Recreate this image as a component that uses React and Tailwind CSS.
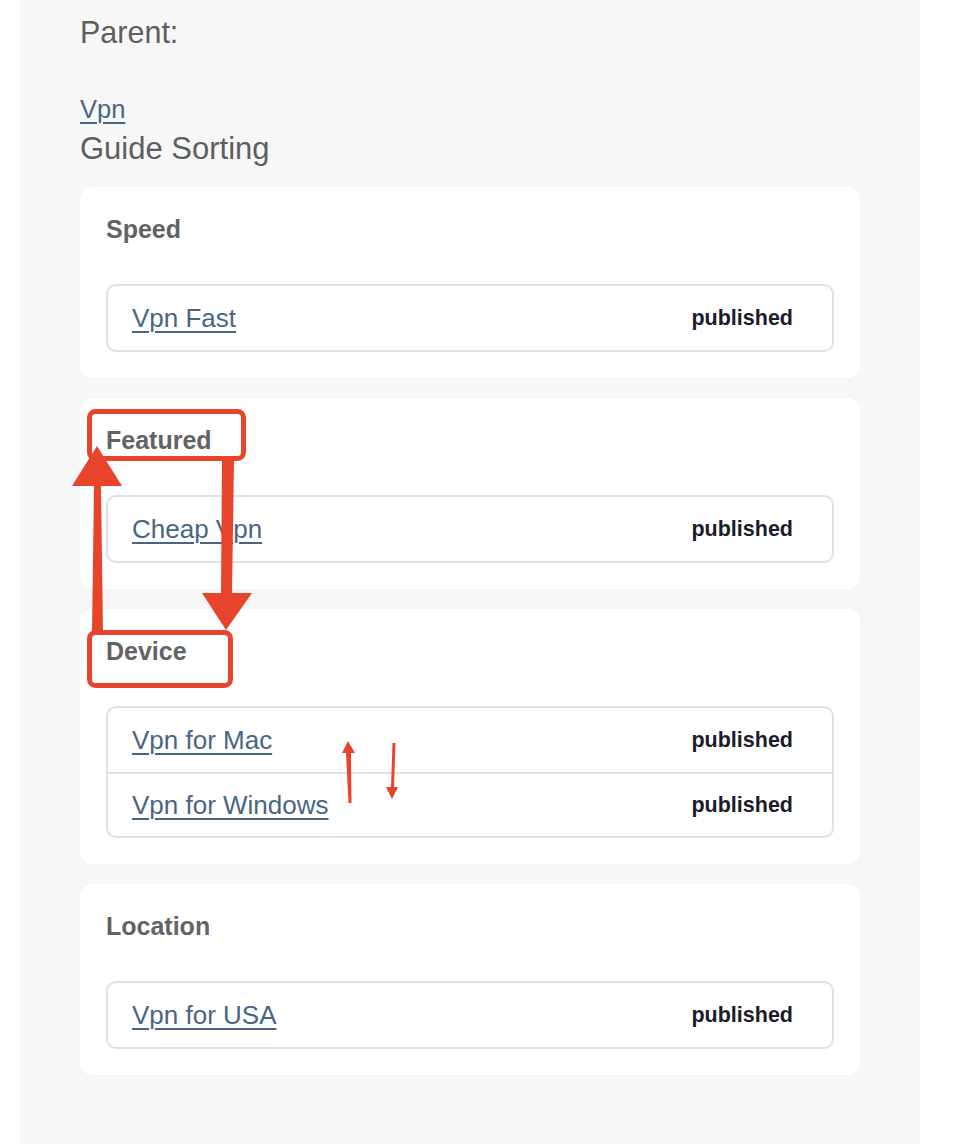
import React from "react";

const groups = [
  { title: "Speed", items: ["Vpn Fast"] },
  { title: "Featured", items: ["Cheap Vpn"] },
  { title: "Device", items: ["Vpn for Mac", "Vpn for Windows"] },
  { title: "Location", items: ["Vpn for USA"] },
];

const Annotations = () => (
  <svg
    className="absolute left-0 top-0 pointer-events-none"
    width="954"
    height="1144"
    viewBox="0 0 954 1144"
  >
    <g fill="none" stroke="#e8442b" strokeWidth="5">
      <rect x="89.5" y="411.5" width="154" height="47" rx="6" />
      <rect x="89.5" y="632.5" width="141" height="53" rx="6" />
    </g>
    <g fill="#e8442b">
      {/* big up arrow */}
      <polygon points="92,632 94,486 72,486 97,446 122,486 101,486 103,632" />
      {/* big down arrow */}
      <polygon points="222,461 234,461 232,593 252,593 226,630 202,593 221,593" />
      {/* small up arrow */}
      <polygon points="348.5,803 351.5,803 351,753 355,753 348,741 342,753 346,753" />
      {/* small down arrow */}
      <polygon points="392.5,743 395.5,743 394,787 398,787 392,799 386,787 391,787" />
    </g>
  </svg>
);

const Card = ({ title, items }) => (
  <div className="bg-white rounded-[12px] pt-[27px] pb-[26px] px-[26px] shadow-[0_0_6px_rgba(0,0,0,0.02)]">
    <h3 className="text-[25px] leading-[30px] font-bold text-[#626365]">{title}</h3>
    <div className="mt-[40px] border-2 border-[#e1e1e1] rounded-[10px]">
      {items.map((item, i) => (
        <div
          key={item}
          className={
            "h-[64px] flex items-center justify-between pl-[24px] pr-[39px]" +
            (i > 0 ? " border-t-2 border-[#e1e1e1]" : "")
          }
        >
          <a href="#" className="text-[26px] text-[#486684] underline underline-offset-[4px] decoration-[1.5px]">
            {item}
          </a>
          <span className="text-[21.5px] font-bold text-[#1b1b2b]">published</span>
        </div>
      ))}
    </div>
  </div>
);

export default function App() {
  return (
    <div
      className="relative min-h-screen bg-white"
      style={{ fontFamily: '"Liberation Sans", Arial, sans-serif' }}
    >
      <div className="ml-[20px] w-[900px] min-h-[1144px] bg-[#f7f7f7] px-[60px] pt-[14px] pb-[40px]">
        <p className="text-[30.5px] leading-[36px] text-[#5d5e60]">Parent:</p>
        <a href="#" className="block mt-[44px] text-[25.5px] leading-[30px] text-[#486684] underline underline-offset-[4px] decoration-[1.5px] w-fit">
          Vpn
        </a>
        <p className="mt-[7px] text-[31px] leading-[36px] text-[#5d5e60]">Guide Sorting</p>
        <div className="mt-[20px] flex flex-col gap-[20px]">
          {groups.map((g) => (
            <Card key={g.title} title={g.title} items={g.items} />
          ))}
        </div>
      </div>
      <Annotations />
    </div>
  );
}
